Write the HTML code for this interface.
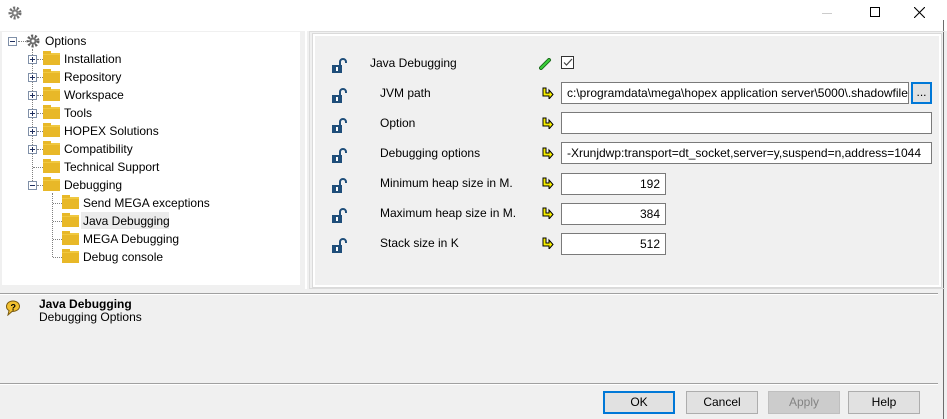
<!DOCTYPE html>
<html><head><style>
*{margin:0;padding:0;box-sizing:border-box}
body{width:947px;height:419px;background:#f0f0f0;position:relative;overflow:hidden;font-family:"Liberation Sans",sans-serif;font-size:12px;color:#000}
.a{position:absolute}
.t{position:absolute;white-space:nowrap;line-height:14px}
.fold{position:absolute;width:17px;height:12px;background:#e8b828;border-top:2px solid #f0c840}
.fold:before{content:"";position:absolute;left:0;top:-4px;width:8px;height:3px;background:#e8b828}
.exp{position:absolute;width:9px;height:9px;border:1px solid #8090a8;background:#fff}
.exp:before{content:"";position:absolute;left:1px;top:3px;width:5px;height:1px;background:#203060}
.exp.p:after{content:"";position:absolute;left:3px;top:1px;width:1px;height:5px;background:#203060}
.dh{position:absolute;height:1px;border-top:1px dotted #808080}
.dv{position:absolute;width:1px;border-left:1px dotted #808080}
.inp{position:absolute;background:#fff;border:1px solid #7a7a7a;height:22px;line-height:20px;padding:0 5px;white-space:nowrap;overflow:hidden}
.btn{position:absolute;top:391px;height:23px;width:72px;border:1px solid #adadad;background:#e1e1e1;text-align:center;line-height:21px}
</style></head><body>
<div class="a" style="left:0;top:0;width:947px;height:31px;background:#fff"></div>
<svg class="a" style="left:8px;top:6px" width="14" height="14" viewBox="0 0 14 14"><circle cx="7" cy="7" r="5" fill="none" stroke="#707070" stroke-width="3" stroke-dasharray="2 1.6"/><circle cx="7" cy="7" r="3.5" fill="#808080"/><circle cx="7" cy="7" r="1.5" fill="#fff"/></svg>
<div class="a" style="left:822px;top:13px;width:10px;height:1px;background:#ccc"></div>
<div class="a" style="left:870px;top:7px;width:10px;height:10px;border:1px solid #000"></div>
<svg class="a" style="left:914px;top:7px" width="11" height="11"><path d="M0 0L11 11M11 0L0 11" stroke="#000" stroke-width="1.1"/></svg>
<div class="a" style="left:943px;top:20px;width:1px;height:399px;background:#6d6d6d"></div>

<!-- tree -->
<div class="a" style="left:2px;top:32px;width:298px;height:253px;background:#fff"></div>
<div class="exp" style="left:8px;top:37px"></div>
<div class="dh" style="left:18px;top:41px;width:8px"></div>
<svg class="a" style="left:26px;top:34px" width="14" height="14" viewBox="0 0 14 14"><circle cx="7" cy="7" r="5" fill="none" stroke="#606060" stroke-width="3" stroke-dasharray="2 1.6"/><circle cx="7" cy="7" r="3.5" fill="#707070"/><circle cx="7" cy="7" r="1.5" fill="#fff"/></svg>
<div class="t" style="left:45px;top:34px">Options</div>
<div class="dv" style="left:32px;top:49px;height:136px"></div>
<div class="exp p" style="left:28px;top:55px"></div><div class="dh" style="left:37px;top:59px;width:6px"></div><div class="fold" style="left:43px;top:53px"></div><div class="t" style="left:64px;top:52px">Installation</div>
<div class="exp p" style="left:28px;top:73px"></div><div class="dh" style="left:37px;top:77px;width:6px"></div><div class="fold" style="left:43px;top:71px"></div><div class="t" style="left:64px;top:70px">Repository</div>
<div class="exp p" style="left:28px;top:91px"></div><div class="dh" style="left:37px;top:95px;width:6px"></div><div class="fold" style="left:43px;top:89px"></div><div class="t" style="left:64px;top:88px">Workspace</div>
<div class="exp p" style="left:28px;top:109px"></div><div class="dh" style="left:37px;top:113px;width:6px"></div><div class="fold" style="left:43px;top:107px"></div><div class="t" style="left:64px;top:106px">Tools</div>
<div class="exp p" style="left:28px;top:127px"></div><div class="dh" style="left:37px;top:131px;width:6px"></div><div class="fold" style="left:43px;top:125px"></div><div class="t" style="left:64px;top:124px">HOPEX Solutions</div>
<div class="exp p" style="left:28px;top:145px"></div><div class="dh" style="left:37px;top:149px;width:6px"></div><div class="fold" style="left:43px;top:143px"></div><div class="t" style="left:64px;top:142px">Compatibility</div>
<div class="dh" style="left:33px;top:167px;width:10px"></div><div class="fold" style="left:43px;top:161px"></div><div class="t" style="left:64px;top:160px">Technical Support</div>
<div class="exp" style="left:28px;top:181px"></div><div class="dh" style="left:37px;top:185px;width:6px"></div><div class="fold" style="left:43px;top:179px"></div><div class="t" style="left:64px;top:178px">Debugging</div>
<div class="dv" style="left:52px;top:193px;height:64px"></div>
<div class="dh" style="left:53px;top:203px;width:9px"></div><div class="fold" style="left:62px;top:197px"></div><div class="t" style="left:83px;top:196px">Send MEGA exceptions</div>
<div class="a" style="left:81px;top:212px;width:88px;height:17px;background:#ebebeb"></div>
<div class="dh" style="left:53px;top:221px;width:9px"></div><div class="fold" style="left:62px;top:215px"></div><div class="t" style="left:83px;top:214px">Java Debugging</div>
<div class="dh" style="left:53px;top:239px;width:9px"></div><div class="fold" style="left:62px;top:233px"></div><div class="t" style="left:83px;top:232px">MEGA Debugging</div>
<div class="dh" style="left:53px;top:257px;width:9px"></div><div class="fold" style="left:62px;top:251px"></div><div class="t" style="left:83px;top:250px">Debug console</div>

<!-- right panel borders -->
<div class="a" style="left:305px;top:31px;width:2px;height:258px;background:#fff"></div>
<div class="a" style="left:309px;top:31px;width:636px;height:258px;border:1px solid #dcdcdc;border-right:none"></div>
<div class="a" style="left:313px;top:34px;width:628px;height:253px;border:2px solid #fff;outline:1px solid #dadada"></div>

<!-- rows -->
<svg width="0" height="0" style="position:absolute"><defs>
<symbol id="lk" viewBox="0 0 16 16"><path d="M9 7V4a3 3 0 0 1 6 0v1" fill="none" stroke="#1f4e7a" stroke-width="2"/><rect x="1" y="7" width="10" height="8" fill="#1f4e7a"/><rect x="5" y="9" width="2" height="4" fill="#fff"/></symbol>
<symbol id="ar" viewBox="0 0 12 12"><path d="M1 1h3v5h3V3l4 4.5-4 4.5V9H1z" fill="#f8f000" stroke="#000" stroke-width="1"/></symbol>
</defs></svg>
<svg class="a" style="left:331px;top:58px" width="16" height="16"><use href="#lk"/></svg>
<div class="t" style="left:370px;top:56px">Java Debugging</div>
<svg class="a" style="left:539px;top:58px" width="13" height="12"><path d="M2 10L10 2" stroke="#1a6a1a" stroke-width="4" stroke-linecap="round"/><path d="M2 10L10 2" stroke="#3ad03a" stroke-width="2" stroke-linecap="round"/></svg>
<div class="a" style="left:561px;top:56px;width:13px;height:13px;border:1px solid #333;background:#fff"></div>
<svg class="a" style="left:563px;top:58px" width="10" height="9"><path d="M1 4.5L3.5 7L9 1" fill="none" stroke="#444" stroke-width="1.2"/></svg>

<svg class="a" style="left:331px;top:88px" width="16" height="16"><use href="#lk"/></svg>
<div class="t" style="left:380px;top:86px">JVM path</div>
<svg class="a" style="left:542px;top:87px" width="12" height="12"><use href="#ar"/></svg>
<div class="inp" style="left:561px;top:82px;width:348px">c:\programdata\mega\hopex application server\5000\.shadowfiles</div>
<div class="a" style="left:911px;top:82px;width:21px;height:22px;border:2px solid #0078d7;background:#e1e1e1;text-align:center;line-height:16px">...</div>

<svg class="a" style="left:331px;top:118px" width="16" height="16"><use href="#lk"/></svg>
<div class="t" style="left:380px;top:116px">Option</div>
<svg class="a" style="left:542px;top:117px" width="12" height="12"><use href="#ar"/></svg>
<div class="inp" style="left:561px;top:112px;width:371px"></div>

<svg class="a" style="left:331px;top:148px" width="16" height="16"><use href="#lk"/></svg>
<div class="t" style="left:380px;top:146px">Debugging options</div>
<svg class="a" style="left:542px;top:147px" width="12" height="12"><use href="#ar"/></svg>
<div class="inp" style="left:561px;top:142px;width:371px">-Xrunjdwp:transport=dt_socket,server=y,suspend=n,address=1044</div>

<svg class="a" style="left:331px;top:178px" width="16" height="16"><use href="#lk"/></svg>
<div class="t" style="left:380px;top:176px">Minimum heap size in M.</div>
<svg class="a" style="left:542px;top:177px" width="12" height="12"><use href="#ar"/></svg>
<div class="inp" style="left:561px;top:173px;width:105px;text-align:right">192</div>

<svg class="a" style="left:331px;top:208px" width="16" height="16"><use href="#lk"/></svg>
<div class="t" style="left:380px;top:206px">Maximum heap size in M.</div>
<svg class="a" style="left:542px;top:207px" width="12" height="12"><use href="#ar"/></svg>
<div class="inp" style="left:561px;top:203px;width:105px;text-align:right">384</div>

<svg class="a" style="left:331px;top:238px" width="16" height="16"><use href="#lk"/></svg>
<div class="t" style="left:380px;top:236px">Stack size in K</div>
<svg class="a" style="left:542px;top:237px" width="12" height="12"><use href="#ar"/></svg>
<div class="inp" style="left:561px;top:233px;width:105px;text-align:right">512</div>

<!-- status -->
<div class="a" style="left:0;top:293px;width:938px;height:2px;border-top:1px solid #a0a0a0;border-bottom:1px solid #fff"></div>
<svg class="a" style="left:5px;top:300px" width="16" height="16" viewBox="0 0 16 16"><path d="M8 1C4 1 1.5 3.5 1.5 6.5c0 2 1 3.3 2.5 4L3 15l4-3.5c4 0 7.5-2 7.5-5S12 1 8 1z" fill="#f2c030" stroke="#7a5a10"/><text x="5.5" y="10.5" font-size="9" font-weight="bold" font-family="Liberation Sans" fill="#000">?</text></svg>
<div class="t" style="left:39px;top:297px;font-weight:bold">Java Debugging</div>
<div class="t" style="left:39px;top:310px">Debugging Options</div>

<div class="a" style="left:0;top:383px;width:938px;height:2px;border-top:1px solid #a0a0a0;border-bottom:1px solid #fff"></div>
<div class="btn" style="left:603px;border:2px solid #0078d7;line-height:19px">OK</div>
<div class="btn" style="left:686px">Cancel</div>
<div class="btn" style="left:768px;background:#cccccc;border-color:#bfbfbf;color:#838383">Apply</div>
<div class="btn" style="left:848px">Help</div>
</body></html>
